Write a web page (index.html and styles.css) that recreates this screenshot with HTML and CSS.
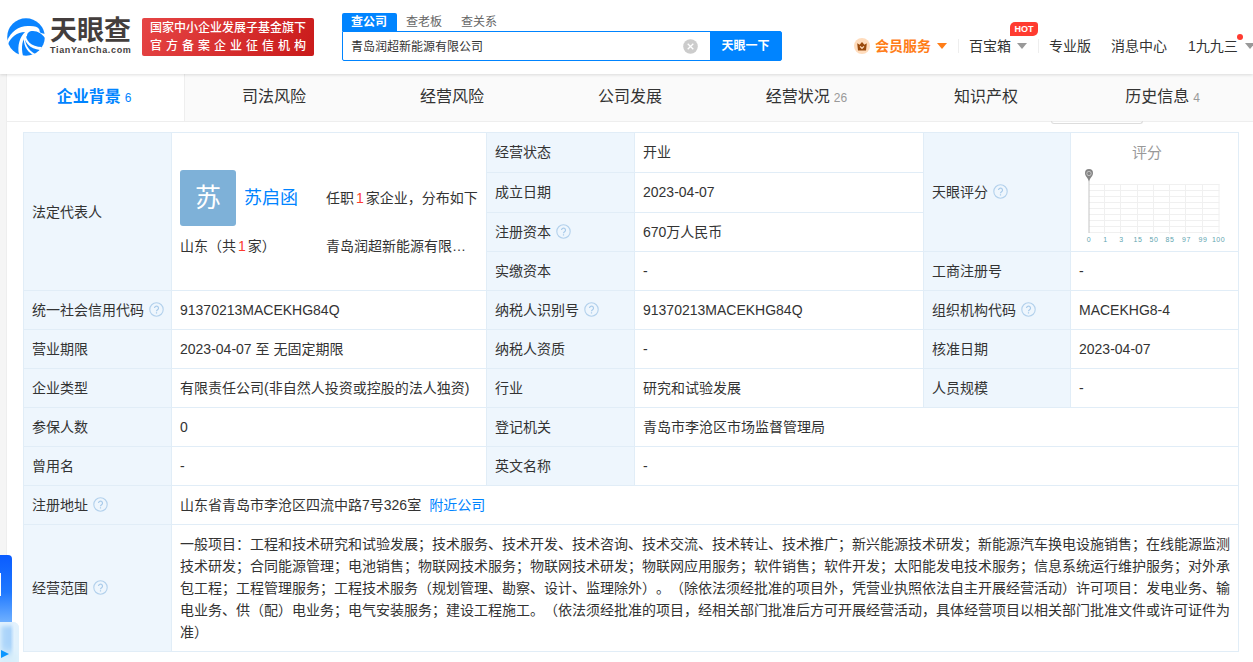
FILE: index.html
```
<!DOCTYPE html>
<html lang="zh-CN">
<head>
  <meta charset="UTF-8">
  <meta name="viewport" content="width=device-width, initial-scale=1.0">
  <title>青岛润超新能源有限公司 - 天眼查</title>
  <link rel="stylesheet" href="styles.css">
</head>
<body>
  <svg class="sprite" aria-hidden="true">
    <symbol id="help" viewBox="0 0 15 15">
      <circle cx="7.5" cy="7.5" r="6.7" fill="none" stroke="#b3d1ec" stroke-width="1.1"/>
      <path d="M5.5 6.1a2 2 0 1 1 3.3 1.5c-.8.6-1.3.9-1.3 1.7M7.5 10.3v1.2" fill="none" stroke="#a9cbea" stroke-width="1.2"/>
    </symbol>
  </svg>

  <header class="header">
    <a class="logo" href="#">
      <svg class="logo-mark" viewBox="0 0 38 38">
        <circle cx="19" cy="19" r="18.8" fill="#0b84ff"/>
        <path d="M0 23C4 13 13 7 23 8c5 0 8 1 9 3 1 1 0 3 2 4l4 1v4c-3-4-7-7-12-7-4 0-6 2-6 5-5 3-6 11-4 20l-4-1C10 27 13 19 18 14 10 14 4 19 1 26z" fill="#fff"/>
        <path d="M19 15c-1 7 5 14 16 14l-2 3c-10-1-16-8-16-15z" fill="#fff"/>
        <path d="M18 17c-1 8 3 15 10 19l-2 1c-7-4-10-11-9-19z" fill="#fff"/>
      </svg>
      <span class="logo-text">
        <span class="logo-cn">天眼查</span>
        <span class="logo-en">TianYanCha.com</span>
      </span>
    </a>
    <div class="slogan">
      <span class="slogan-top">国家中小企业发展子基金旗下</span>
      <span class="slogan-bottom">官方备案企业征信机构</span>
    </div>

    <div class="search">
      <div class="search-tabs">
        <span class="search-tab active">查公司</span>
        <span class="search-tab">查老板</span>
        <span class="search-tab">查关系</span>
      </div>
      <div class="search-box">
        <span class="search-input">青岛润超新能源有限公司</span>
        <svg class="search-clear" viewBox="0 0 15 15">
          <circle cx="7.5" cy="7.5" r="7.3" fill="#ccc"/>
          <path d="M4.7 4.7l5.6 5.6M10.3 4.7l-5.6 5.6" stroke="#fff" stroke-width="1.3"/>
        </svg>
        <span class="search-btn">天眼一下</span>
      </div>
    </div>

    <nav class="nav">
      <a class="nav-item vip" href="#">
        <svg class="crown" viewBox="0 0 16 16">
          <circle cx="8" cy="8" r="8" fill="#ffdcbc"/>
          <path d="M3.2 5.2l2.400 1.500L8 3.900l2.400 2.800 2.400-1.500-.8 7.300H4z" fill="#9a4a0c"/>
          <path d="M6 8.400l2 1.900 2-1.900" fill="none" stroke="#ffdcbc" stroke-width="1.2"/>
        </svg>
        会员服务<i class="caret"></i>
      </a>
      <a class="nav-item toolbox" href="#">百宝箱<i class="caret"></i><b class="hot">HOT</b></a>
      <a class="nav-item pro" href="#">专业版</a>
      <a class="nav-item message" href="#">消息中心</a>
      <a class="nav-item user" href="#">1九九三<i class="caret"></i><b class="dot"></b></a>
    </nav>
  </header>

  <main class="main">
    <div class="tabs">
      <a class="tab active" href="#">企业背景<span>6</span></a>
      <a class="tab" href="#">司法风险</a>
      <a class="tab" href="#">经营风险</a>
      <a class="tab" href="#">公司发展</a>
      <a class="tab" href="#">经营状况<span>26</span></a>
      <a class="tab" href="#">知识产权</a>
      <a class="tab" href="#">历史信息<span>4</span></a>
      <div class="tab-popup"></div>
    </div>

    <table class="info">
      <colgroup>
        <col class="c1"><col class="c2"><col class="c3"><col class="c4"><col class="c5"><col class="c6">
      </colgroup>
      <tr class="tall">
        <th rowspan="4" class="mid">法定代表人</th>
        <td rowspan="4" class="legal">
          <div class="person">
            <div class="avatar">苏</div>
            <a class="person-name" href="#">苏启函</a>
            <span class="person-count">任职<em>1</em>家企业，分布如下</span>
          </div>
          <div class="region">
            <span class="region-name">山东（共<em>1</em>家）</span>
            <span>青岛润超新能源有限…</span>
          </div>
        </td>
        <th>经营状态</th>
        <td>开业</td>
        <th rowspan="3" class="mid">天眼评分<svg class="help"><use href="#help"/></svg></th>
        <td rowspan="3" class="score">
          <svg class="score-chart" viewBox="0 0 167 118">
            <text class="score-title" x="76" y="25" text-anchor="middle">评分</text>
            <path class="score-grid" d="M18 51.500H148.500M18 57.500H148.500M18 63.500H148.500M18 69.500H148.500M18 75.500H148.500M18 81.500H148.500M18 87.500H148.500M18 93.500H148.500M18 99.500H148.500M33.500 51V101M49.500 51V101M66.500 51V101M82.500 51V101M98.500 51V101M114.500 51V101M131.500 51V101M148 51V101"/>
            <path d="M18 46V100" stroke="#c4c4c4"/>
            <path d="M18 48.500c-1-4-4-5-4-8.500a4 4 0 0 1 8 0c0 3.500-3 4.500-4 8.500z" fill="#858585"/>
            <circle cx="18" cy="40.500" r="2.200" fill="none" stroke="#d0d0d0" stroke-width=".8"/>
            <g class="score-axis" text-anchor="middle">
              <text x="18" y="109">0</text>
              <text x="34.500" y="109">1</text>
              <text x="50.500" y="109">3</text>
              <text x="67" y="109">15</text>
              <text x="83" y="109">50</text>
              <text x="99" y="109">85</text>
              <text x="115.500" y="109">97</text>
              <text x="132" y="109">99</text>
              <text x="147.500" y="109">100</text>
            </g>
          </svg>
        </td>
      </tr>
      <tr class="tall">
        <th>成立日期</th>
        <td>2023-04-07</td>
      </tr>
      <tr>
        <th>注册资本<svg class="help"><use href="#help"/></svg></th>
        <td>670万人民币</td>
      </tr>
      <tr>
        <th>实缴资本</th>
        <td>-</td>
        <th>工商注册号</th>
        <td>-</td>
      </tr>
      <tr>
        <th>统一社会信用代码<svg class="help"><use href="#help"/></svg></th>
        <td>91370213MACEKHG84Q</td>
        <th>纳税人识别号<svg class="help"><use href="#help"/></svg></th>
        <td>91370213MACEKHG84Q</td>
        <th>组织机构代码<svg class="help"><use href="#help"/></svg></th>
        <td>MACEKHG8-4</td>
      </tr>
      <tr>
        <th>营业期限</th>
        <td>2023-04-07 至 无固定期限</td>
        <th>纳税人资质</th>
        <td>-</td>
        <th>核准日期</th>
        <td>2023-04-07</td>
      </tr>
      <tr>
        <th>企业类型</th>
        <td>有限责任公司(非自然人投资或控股的法人独资)</td>
        <th>行业</th>
        <td>研究和试验发展</td>
        <th>人员规模</th>
        <td>-</td>
      </tr>
      <tr>
        <th>参保人数</th>
        <td>0</td>
        <th>登记机关</th>
        <td colspan="3">青岛市李沧区市场监督管理局</td>
      </tr>
      <tr>
        <th>曾用名</th>
        <td>-</td>
        <th>英文名称</th>
        <td colspan="3">-</td>
      </tr>
      <tr>
        <th>注册地址<svg class="help"><use href="#help"/></svg></th>
        <td colspan="5">山东省青岛市李沧区四流中路7号326室<a class="nearby" href="#">附近公司</a></td>
      </tr>
      <tr class="scope">
        <th>经营范围<svg class="help"><use href="#help"/></svg></th>
        <td colspan="5">一般项目：工程和技术研究和试验发展；技术服务、技术开发、技术咨询、技术交流、技术转让、技术推广；新兴能源技术研发；新能源汽车换电设施销售；在线能源监测<br>技术研发；合同能源管理；电池销售；物联网技术服务；物联网技术研发；物联网应用服务；软件销售；软件开发；太阳能发电技术服务；信息系统运行维护服务；对外承<br>包工程；工程管理服务；工程技术服务（规划管理、勘察、设计、监理除外）。（除依法须经批准的项目外，凭营业执照依法自主开展经营活动）许可项目：发电业务、输<br>电业务、供（配）电业务；电气安装服务；建设工程施工。（依法须经批准的项目，经相关部门批准后方可开展经营活动，具体经营项目以相关部门批准文件或许可证件为<br>准）</td>
      </tr>
    </table>
  </main>

  <div class="float-ad">
    <div class="float-ad-banner"></div>
    <div class="float-ad-play"></div>
  </div>
</body>
</html>
```
FILE: styles.css
```
* {
  box-sizing: border-box;
}

body {
  margin: 0;
  height: 662px;
  overflow: hidden;
  background: #f5f5f5;
  color: #333;
  font: 14px/22px "Liberation Sans", "Noto Sans CJK SC", sans-serif;
  text-spacing-trim: space-all;
}

a {
  color: inherit;
  text-decoration: none;
}

em {
  color: #fd3a2d;
  font-style: normal;
  padding: 0 2px;
}

.sprite {
  position: absolute;
  width: 0;
  height: 0;
}

/* header */
.header {
  position: relative;
  z-index: 2;
  display: flex;
  align-items: flex-start;
  height: 74px;
  padding-left: 7px;
  background: #fff;
  box-shadow: 0 1px 3px rgba(0, 0, 0, 0.13);
  white-space: nowrap;
}

.header > * {
  flex-shrink: 0;
}

.logo {
  display: flex;
  width: 135px;
  padding-top: 18px;
}

.logo-mark {
  width: 38px;
  height: 38px;
  margin-right: 5px;
}

.logo-text {
  display: flex;
  flex-direction: column;
  color: #443e3d;
}

.logo-cn {
  font-size: 27px;
  font-weight: bold;
  line-height: 27px;
}

.logo-en {
  font-size: 9px;
  font-weight: bold;
  line-height: 10px;
  letter-spacing: 0.65px;
}

.slogan {
  display: flex;
  flex-direction: column;
  width: 172px;
  height: 38px;
  margin-top: 18px;
  padding: 1px 8px;
  border-radius: 2px;
  background: linear-gradient(120deg, #e64545, #c91a1a);
  color: #fff;
  font-size: 12px;
  line-height: 18px;
  font-weight: 500;
}

.slogan-bottom {
  letter-spacing: 4px;
}

.search {
  width: 440px;
  margin: 13px 0 0 28px;
}

.search-tabs {
  display: flex;
  height: 18px;
  font-size: 12px;
  line-height: 18px;
  color: #666;
}

.search-tab {
  width: 55px;
  padding-left: 9px;
}

.search-tab.active {
  border-radius: 2px 2px 0 0;
  background: #0084ff;
  color: #fff;
  font-weight: bold;
}

.search-box {
  display: flex;
  align-items: center;
  height: 30px;
  border: 1px solid #0084ff;
  border-radius: 0 2px 2px 2px;
}

.search-input {
  flex: 1;
  padding: 1px 0 0 8px;
  font-size: 12px;
}

.search-clear {
  width: 15px;
  height: 15px;
  margin-right: 12px;
}

.search-btn {
  width: 71px;
  height: 28px;
  background: #0084ff;
  color: #fff;
  font-size: 12px;
  font-weight: bold;
  line-height: 28px;
  text-align: center;
}

.nav {
  display: flex;
  margin: 35px 0 0 72px;
}

.nav-item {
  position: relative;
  display: flex;
  flex-shrink: 0;
  align-items: center;
  height: 22px;
}

.caret {
  margin-left: 6px;
  border: 5px solid transparent;
  border-top: 6px solid #999;
  border-bottom: 0;
}

.vip {
  width: 115px;
  color: #ff7d18;
  font-weight: bold;
}

.vip .caret {
  border-top-color: #ff7d18;
}

.crown {
  width: 16px;
  height: 16px;
  margin-right: 5px;
}

.toolbox {
  width: 80px;
}

.toolbox::before,
.pro::before {
  content: "";
  position: absolute;
  left: -11px;
  top: 4px;
  width: 1px;
  height: 14px;
  background: #eee;
}

.pro {
  width: 62px;
}

.message {
  width: 77px;
}

.user .caret {
  margin-left: 7px;
}

.hot {
  position: absolute;
  left: 41px;
  top: -13px;
  width: 28px;
  height: 14px;
  border-radius: 5px 3px 5px 0;
  background: #ff3b30;
  color: #fff;
  font-size: 9px;
  line-height: 14px;
  text-align: center;
}

.dot {
  position: absolute;
  left: 49px;
  top: -1px;
  width: 6px;
  height: 6px;
  border-radius: 50%;
  background: #ff3b30;
}

/* page body */
.main {
  height: 588px;
  margin-left: 7px;
  background: #fff;
  box-shadow: 0 0 1px #ccc;
}

.tabs {
  position: relative;
  display: flex;
  height: 48px;
  border-bottom: 1px solid #eee;
}

.tab {
  width: 178px;
  padding-top: 12px;
  background: #fafafa;
  font-size: 16px;
  text-align: center;
}

.tab span {
  margin: 0 3px 0 4px;
  color: #999;
  font-size: 12px;
  font-weight: normal;
}

.tab.active {
  border-right: 1px solid #eee;
  background: #fff;
  color: #0084ff;
  font-weight: bold;
}

.tab.active span {
  color: #0084ff;
}

.tab-popup {
  position: absolute;
  left: 1044px;
  top: 47px;
  width: 92px;
  height: 3px;
  border: 1px solid #ddd;
  border-top: 0;
  border-radius: 0 0 3px 3px;
}

/* company info */
.info {
  width: 1216px;
  margin: 10px 0 0 16px;
  border: solid #e1edf7;
  border-width: 1px 0 0 1px;
  border-spacing: 0;
  table-layout: fixed;
}

.c1, .c3 { width: 148px; }
.c2 { width: 315px; }
.c4 { width: 289px; }
.c5 { width: 147px; }
.c6 { width: 168px; }

.info tr {
  height: 39px;
}

.info tr.tall {
  height: 40px;
}

.info tr.scope {
  height: 127px;
}

.info th,
.info td {
  padding: 0 0 0 8px;
  border: solid #e1edf7;
  border-width: 0 1px 1px 0;
  font-weight: normal;
  text-align: left;
  white-space: nowrap;
}

.info .tall th:not(.mid),
.info .tall td {
  padding-bottom: 1px;
}

.info th {
  background: #eef6fd;
}

.help {
  width: 15px;
  height: 15px;
  margin-left: 5px;
  vertical-align: -2px;
}

.info .tall td.legal {
  padding-top: 3px;
  padding-bottom: 0;
}

.person {
  display: flex;
  align-items: center;
  height: 56px;
}

.avatar {
  width: 56px;
  height: 56px;
  border-radius: 3px;
  background: #7eb1d8;
  color: #fff;
  font-size: 26px;
  line-height: 56px;
  text-align: center;
}

.person-name {
  width: 82px;
  margin-left: 8px;
  color: #0084ff;
  font-size: 18px;
}

.region {
  display: flex;
  margin-top: 9px;
}

.region-name {
  width: 146px;
}

.info .tall td.score {
  padding: 0;
}

.score-chart {
  display: block;
  width: 167px;
  height: 118px;
}

.score-title {
  fill: #999;
  font-size: 15px;
}

.score-grid {
  fill: none;
  stroke: #f0f0f0;
}

.score-axis {
  fill: #5fa5b0;
  font-size: 7px;
  letter-spacing: 0.5px;
}

.nearby {
  margin-left: 8px;
  color: #0084ff;
}

/* left floating ad */
.float-ad {
  position: absolute;
  z-index: 3;
  left: 0;
  top: 555px;
  width: 20px;
  height: 107px;
}

.float-ad-banner {
  width: 12px;
  height: 67px;
  padding-top: 18px;
  border-radius: 0 4px 0 0;
  background: linear-gradient(#0a5cff, #1f78ff 55%, #6fb0ff);
}

.float-ad-banner::before {
  content: "";
  display: block;
  width: 1px;
  height: 23px;
  background: #fff;
}

.float-ad-play {
  display: flex;
  align-items: flex-end;
  width: 19px;
  height: 40px;
  padding-bottom: 4px;
  border-radius: 0 6px 0 0;
  background: linear-gradient(90deg, #a9d3fa 55%, #e3f2fd 75%);
  box-shadow: inset 0 4px 4px #e3f2fd, inset 0 -10px 8px #d9effb;
}

.float-ad-play::before {
  content: "";
  margin-left: 1px;
  border: 4px solid transparent;
  border-left: 8px solid #0a96ff;
  border-right: 0;
}
```
